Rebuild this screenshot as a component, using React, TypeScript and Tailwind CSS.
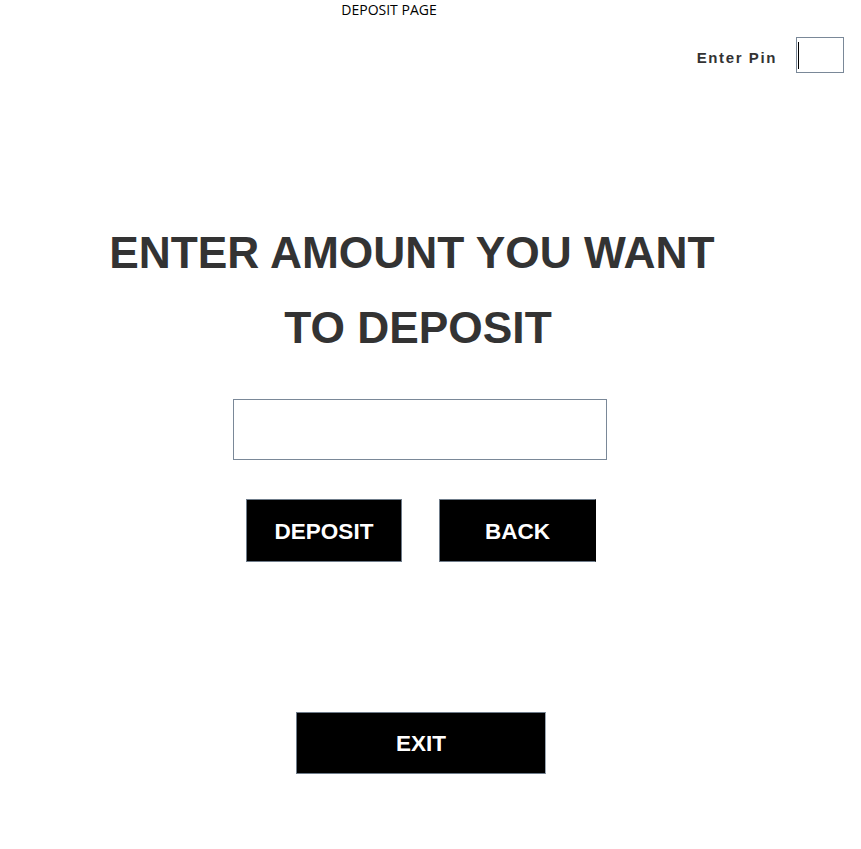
import React from "react";

export default function App() {
  return (
    <div className="w-[861px] h-[849px] bg-white" style={{ fontFamily: '"Liberation Sans", Arial, sans-serif' }}>
      <div className="w-[778px] text-center pt-[2px] h-[20px] text-[14px] leading-[16px] text-black" style={{ fontFamily: '"Open Sans", "Noto Sans", sans-serif' }}>
        DEPOSIT PAGE
      </div>
      <div className="flex justify-end items-center pr-[17px] mt-[17px]">
        <span className="mt-[6px] text-[15px] font-bold tracking-[1.6px] text-[#333333]">Enter Pin</span>
        <div className="ml-[19px] w-[48px] h-[36px] border border-[#7a8898] flex items-center pl-[1px]">
          <div className="w-[1px] h-[27px] bg-black" />
        </div>
      </div>
      <div className="w-[842px] flex flex-col items-center">
        <div className="mt-[142px] pr-[6px] text-center text-[44.3px] leading-[75px] font-bold text-[#333333]">
          <div>ENTER AMOUNT YOU WANT&nbsp;</div>
          <div>TO DEPOSIT</div>
        </div>
        <div className="mt-[34px] mr-[2px] w-[374px] h-[61px] border border-[#7a8898] bg-white" />
        <div className="mt-[39px] flex gap-[37px]">
          <button className="w-[156px] h-[63px] pt-[3px] bg-black border border-[#6f7c8a] text-white text-[22.5px] font-bold">DEPOSIT</button>
          <button className="w-[157px] h-[63px] pt-[3px] bg-black border border-[#6f7c8a] border-r-black text-white text-[22.5px] font-bold">BACK</button>
        </div>
        <button className="mt-[150px] w-[250px] h-[62px] pt-[2px] bg-black border border-[#6f7c8a] border-r-[#9aa5b1] text-white text-[22.5px] font-bold">EXIT</button>
      </div>
    </div>
  );
}
